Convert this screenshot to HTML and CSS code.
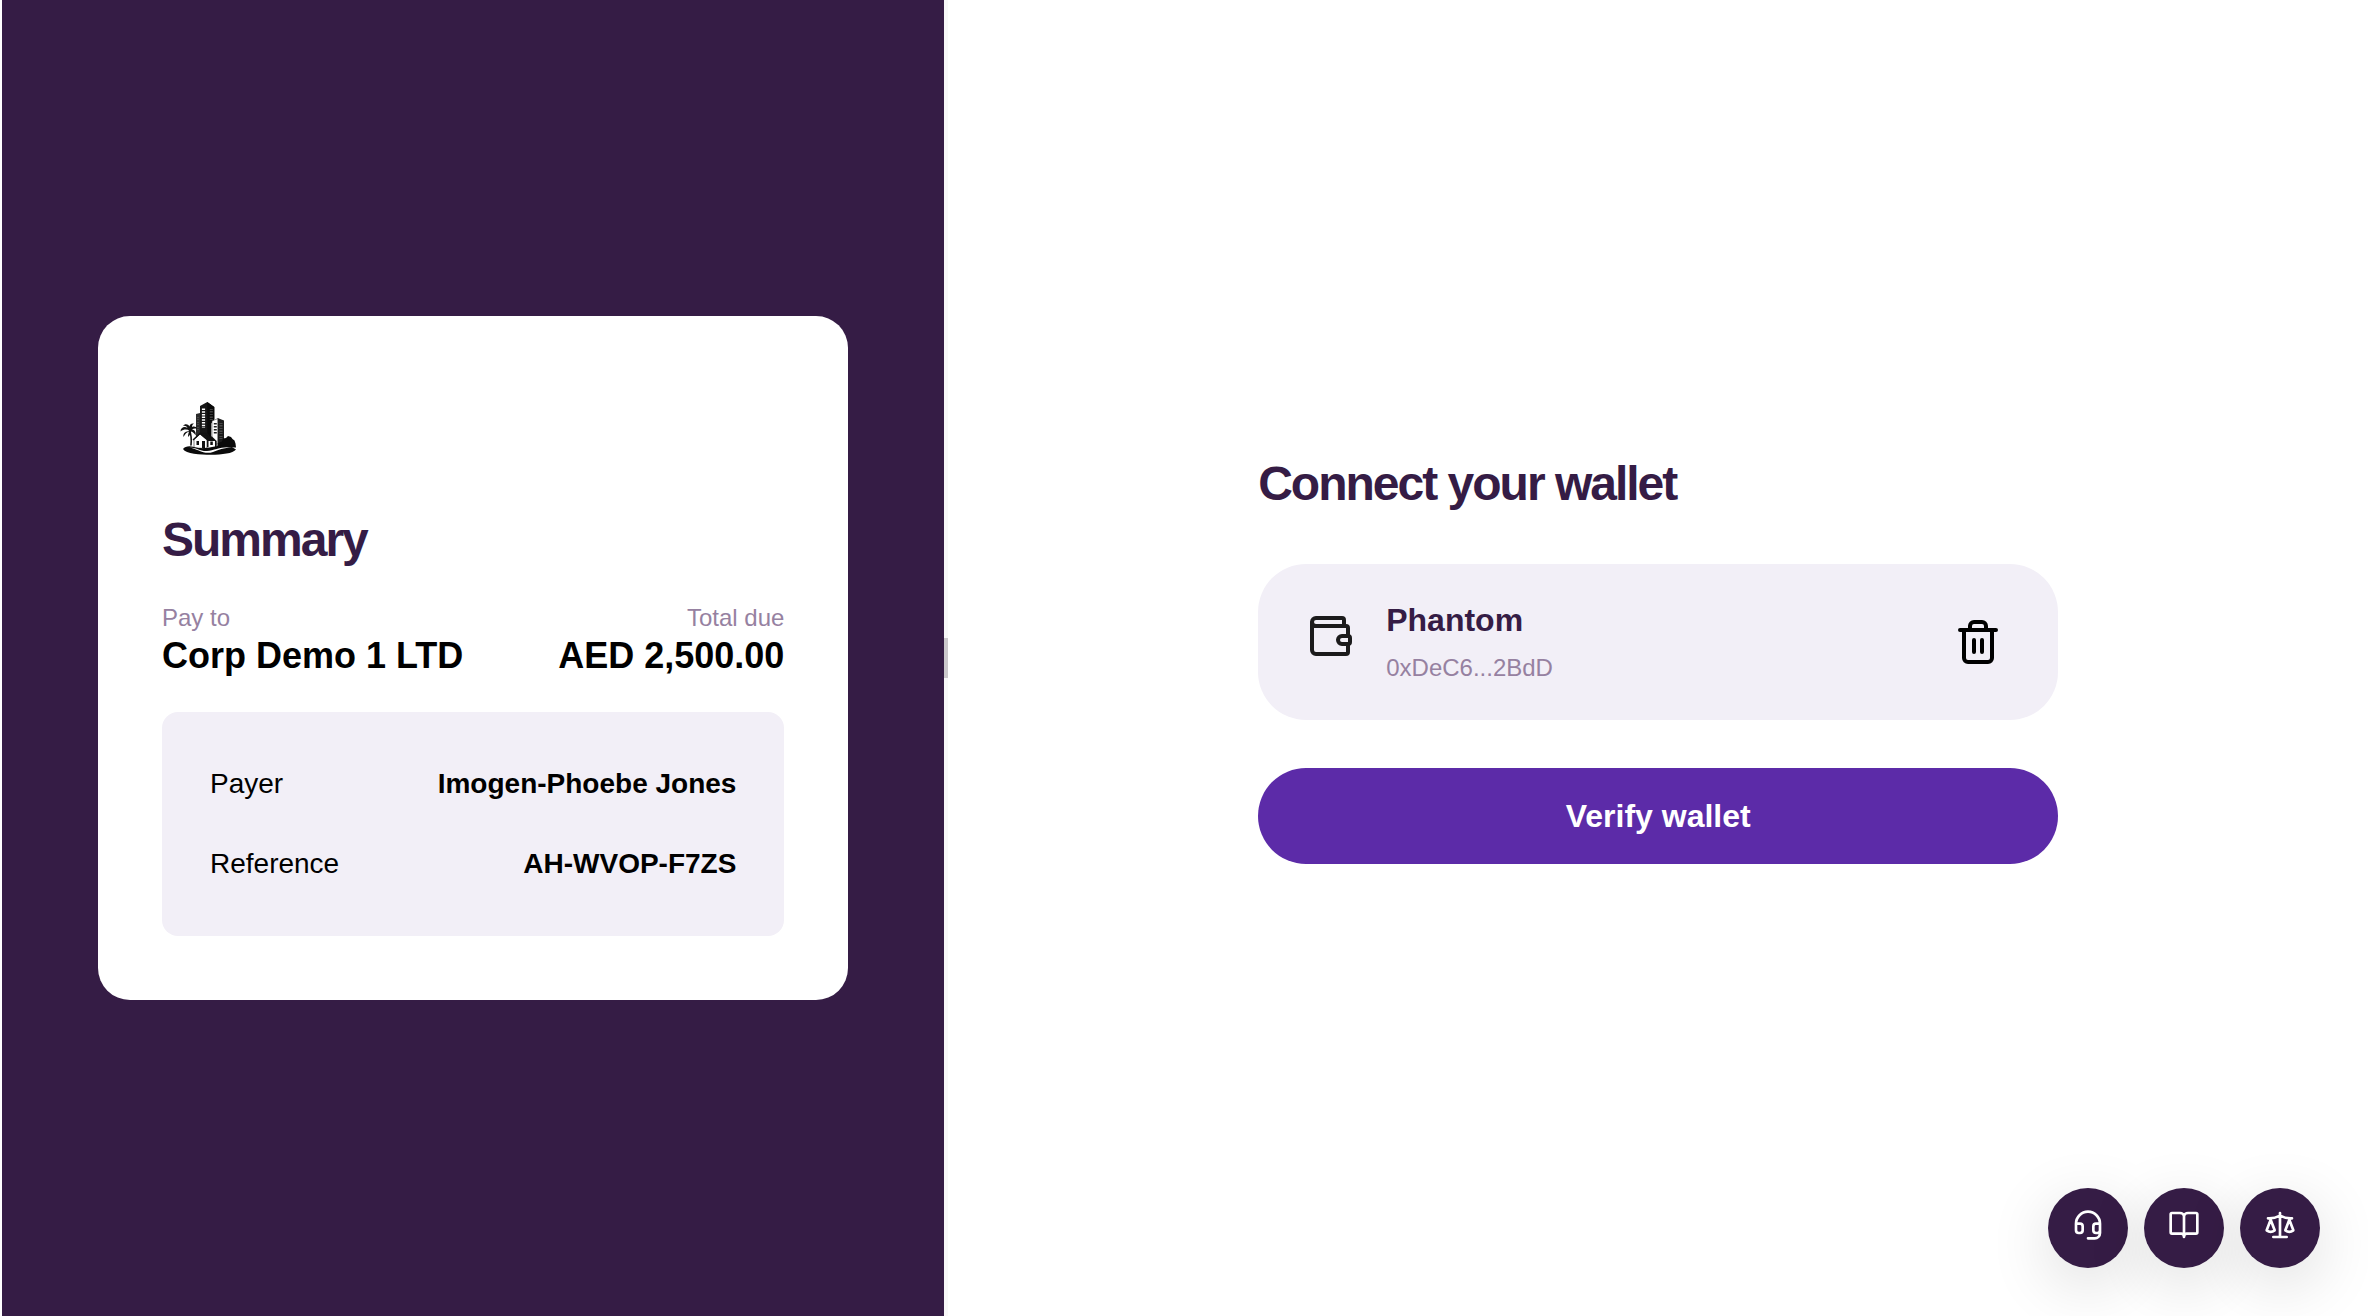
FILE: index.html
```html
<!DOCTYPE html>
<html lang="en">
<head>
    <meta charset="UTF-8">
    <meta name="viewport" content="width=device-width, initial-scale=1.0">
    <title>Connect your wallet</title>
    <link rel="stylesheet" href="styles.css">
</head>
<body>
    <div class="page">
        <aside class="sidebar">
            <section class="summary">
                <svg class="logo" viewBox="0 0 96 96" role="img" aria-label="Corp Demo 1 LTD logo">
                    <!-- towers -->
                    <path fill="#2b2b2b" d="M34 34l4-1v28h-4z"/>
                    <path fill="#161616" d="M38 26l7.300-4 7 5v14l-4 3v20H38z"/>
                    <path fill="#0a0a0a" d="M45.300 22l7 5v12l-3 3v22h-4z"/>
                    <path fill="#fff" stroke="#333" stroke-width=".5" d="M50 41l6-2.500V64h-6z"/>
                    <path fill="#1c1c1c" d="M55.700 38l6.300 2.500V64h-6.300z"/>
                    <path stroke="#fff" stroke-width="3.200" stroke-dasharray="1.500 1.200" d="M41.500 28.500v19.500"/>
                    <path stroke="#777" stroke-width="3" stroke-dasharray=".6 2" d="M49.300 29v11M59 43v16"/>
                    <path stroke="#666" stroke-width="2" stroke-dasharray=".5 2" d="M36 37v14"/>
                    <path stroke="#222" stroke-width="3" stroke-dasharray="1.500 1.500" d="M53.300 43v12"/>
                    <!-- bushes -->
                    <path fill="#0a0a0a" d="M55 67l1-4 4-1.500 1-3 3-.5 2-2 3 1 1.500 2 2 1.500 1 3 .5 4z"/>
                    <!-- palm -->
                    <path fill="none" stroke="#111" stroke-width="1.600" stroke-linecap="round" d="M29 65c.7-6 .3-10-1.500-15"/>
                    <path fill="#111" d="M28 51c-3-2-6-2-9.500.5 0-4 4-5.500 7-3.500-1-2-2.500-2.500-4.500-2 1.500-2.500 5-2.500 6.500.5 0-2 1.500-3.500 4.500-3-1.500 1-2 2-2 3.500 2-1 4.500-.5 5 2-2-.8-3.500-.5-5 .5 2.500 0 4.500 3 3.500 6-1-2-2.500-3.500-4.500-4-.5 2-1 4-3 5.500 0-2 .5-4 1-5.500-2 .5-4 2.500-5.500 5.500-1-4 2.500-6 6.500-6z"/>
                    <!-- house -->
                    <path fill="#111" d="M46 56l4 .5 4.700 4.500v6H44z"/>
                    <path fill="#fff" stroke="#222" stroke-width=".6" d="M32 68v-8.500l6-5.500 7 6v8.500z"/>
                    <path fill="#fff" d="M46.500 61h6.500v6.500h-6.500z"/>
                    <path fill="none" stroke="#111" stroke-width="1.400" d="M31 60l7-6.500 8 6.500M38 53.500h7l4 6M41 56l3-1 3 4"/>
                    <path fill="#111" d="M34.500 61h2.500v4h-2.500zM40 61h3v7h-3zM48.300 61.500h2.500v3.500h-2.500z"/>
                    <!-- island -->
                    <path fill="#0a0a0a" d="M21 69c2-2.500 6-3.500 11-2 7 2 12 1 18 0 7-1.500 14-1.500 19-.5l5 3c-3 4-14 5.200-25 5.200S24 74 21 69z"/>
                    <path fill="#fff" d="M27 67.500c7 0 12 4 18 3.500 8-.7 14-5 25-3.500-8 0-14 2.500-19 4.500-9 3-15-3-24-4.500z"/>
                </svg>
                <h2 class="title">Summary</h2>
                <div class="totals">
                    <div>
                        <div class="label">Pay to</div>
                        <div class="amount">Corp Demo 1 LTD</div>
                    </div>
                    <div class="total-due">
                        <div class="label">Total due</div>
                        <div class="amount">AED 2,500.00</div>
                    </div>
                </div>
                <dl class="details">
                    <div class="detail-row">
                        <dt>Payer</dt>
                        <dd>Imogen-Phoebe Jones</dd>
                    </div>
                    <div class="detail-row">
                        <dt>Reference</dt>
                        <dd>AH-WVOP-F7ZS</dd>
                    </div>
                </dl>
            </section>
        </aside>

        <div class="divider"><span class="handle"></span></div>

        <main class="content">
            <div class="connect">
                <h1 class="title">Connect your wallet</h1>
                <div class="wallet">
                    <svg class="icon wallet-icon" viewBox="0 0 24 24" aria-hidden="true">
                        <path d="M19 7V4a1 1 0 0 0-1-1H5a2 2 0 0 0 0 4h15a1 1 0 0 1 1 1v4h-3a2 2 0 0 0 0 4h3a1 1 0 0 0 1-1v-2a1 1 0 0 0-1-1M3 5v14a2 2 0 0 0 2 2h15a1 1 0 0 0 1-1v-4"/>
                    </svg>
                    <div class="wallet-info">
                        <div class="wallet-name">Phantom</div>
                        <div class="wallet-address">0xDeC6...2BdD</div>
                    </div>
                    <button type="button" class="remove" aria-label="Remove wallet">
                        <svg class="icon" viewBox="0 0 24 24" aria-hidden="true">
                            <path d="M3 6h18M19 6v14a2 2 0 0 1-2 2H7a2 2 0 0 1-2-2V6M8 6V4a2 2 0 0 1 2-2h4a2 2 0 0 1 2 2v2M10 11v6M14 11v6"/>
                        </svg>
                    </button>
                </div>
                <button type="button" class="verify">Verify wallet</button>
            </div>
        </main>
    </div>

    <nav class="help" aria-label="Help">
        <button type="button" class="help-button" aria-label="Support">
            <svg class="icon" viewBox="0 0 24 24" aria-hidden="true">
                <path d="M3 11h3a2 2 0 0 1 2 2v3a2 2 0 0 1-2 2H5a2 2 0 0 1-2-2v-5a9 9 0 0 1 18 0v5a2 2 0 0 1-2 2h-1a2 2 0 0 1-2-2v-3a2 2 0 0 1 2-2h3M21 16v2a4 4 0 0 1-4 4h-5"/>
            </svg>
        </button>
        <button type="button" class="help-button" aria-label="Documentation">
            <svg class="icon" viewBox="0 0 24 24" aria-hidden="true">
                <path d="M12 5.500V21M3 18.500a1 1 0 0 1-1-1V4a1 1 0 0 1 1-1h6a3 2.500 0 0 1 3 2.500A3 2.500 0 0 1 15 3h6a1 1 0 0 1 1 1v13.500a1 1 0 0 1-1 1h-7a2 2.500 0 0 0-2 2.500 2 2.500 0 0 0-2-2.500z"/>
            </svg>
        </button>
        <button type="button" class="help-button" aria-label="Legal">
            <svg class="icon" viewBox="0 0 24 24" aria-hidden="true">
                <path d="M12 3v18M19 8l3 8a5 5 0 0 1-6 0zV7M3 7h1a17 17 0 0 0 8-2 17 17 0 0 0 8 2h1M5 8l3 8a5 5 0 0 1-6 0zV7M7 21h10"/>
            </svg>
        </button>
    </nav>
</body>
</html>
```
FILE: styles.css
```css
* {
    box-sizing: border-box;
}

body {
    margin: 0;
    font-family: "Liberation Sans", Arial, sans-serif;
    background-color: #fff;
    color: #000;
}

h1,
h2,
dl,
dd {
    margin: 0;
}

button {
    border: none;
    font-family: inherit;
    cursor: pointer;
}

.page {
    display: flex;
    min-height: 100vh;
    padding-left: 2px;
}

.sidebar {
    display: flex;
    flex: 1;
    align-items: center;
    padding: 48px 96px;
    background-color: #351c45;
}

.summary {
    width: 100%;
    padding: 64px;
    background-color: #fff;
    border-radius: 32px;
}

.logo {
    display: block;
    width: 96px;
    height: 96px;
}

.title {
    font-size: 48px;
    line-height: 64px;
    letter-spacing: -2px;
    color: #351c45;
}

.summary .title {
    margin: 32px 0;
}

.totals {
    display: flex;
    justify-content: space-between;
    margin-bottom: 32px;
}

.total-due {
    text-align: right;
}

.label {
    font-size: 24px;
    line-height: 28px;
    color: #9681a1;
}

.amount {
    font-size: 36px;
    font-weight: bold;
    line-height: 48px;
}

.details {
    display: flex;
    flex-direction: column;
    gap: 32px;
    padding: 48px;
    font-size: 28px;
    line-height: 48px;
    background-color: #f2eff7;
    border-radius: 16px;
}

.detail-row {
    display: flex;
    justify-content: space-between;
}

.detail-row dd {
    font-weight: bold;
}

.divider {
    display: flex;
    align-items: center;
    width: 4px;
    background-color: #f8f8f8;
}

.handle {
    width: 4px;
    height: 40px;
    background-color: #cbc8cb;
}

.content {
    display: flex;
    align-items: center;
    justify-content: center;
    width: 60%;
}

.connect {
    display: flex;
    flex-direction: column;
    gap: 48px;
    width: 100%;
    max-width: 800px;
}

.icon {
    display: block;
    width: 48px;
    height: 48px;
    fill: none;
    stroke: currentColor;
    stroke-width: 2;
    stroke-linecap: round;
    stroke-linejoin: round;
}

.wallet {
    display: flex;
    align-items: center;
    gap: 32px;
    padding: 32px 48px;
    background-color: #f2eff7;
    border-radius: 48px;
}

.wallet-icon {
    align-self: flex-start;
    margin-top: 16px;
    color: #1c1b1c;
}

.wallet-info {
    display: flex;
    flex: 1;
    flex-direction: column;
    gap: 4px;
}

.wallet-name {
    font-size: 32px;
    font-weight: bold;
    line-height: 48px;
    color: #351c45;
}

.wallet-address {
    font-size: 24px;
    line-height: 40px;
    color: #9681a1;
}

.remove {
    padding: 8px;
    background: none;
    color: #000;
}

.verify {
    height: 96px;
    font-size: 32px;
    font-weight: bold;
    color: #fff;
    background-color: #5c2ba8;
    border-radius: 48px;
}

.help {
    position: fixed;
    right: 48px;
    bottom: 48px;
    display: flex;
    gap: 16px;
}

.help-button {
    display: flex;
    justify-content: center;
    width: 80px;
    height: 80px;
    padding: 21px 0;
    color: #fff;
    background-color: #351c45;
    border-radius: 50%;
    box-shadow: 0 16px 64px rgba(0, 0, 0, 0.14);
}

.help-button .icon {
    width: 32px;
    height: 32px;
}
```
